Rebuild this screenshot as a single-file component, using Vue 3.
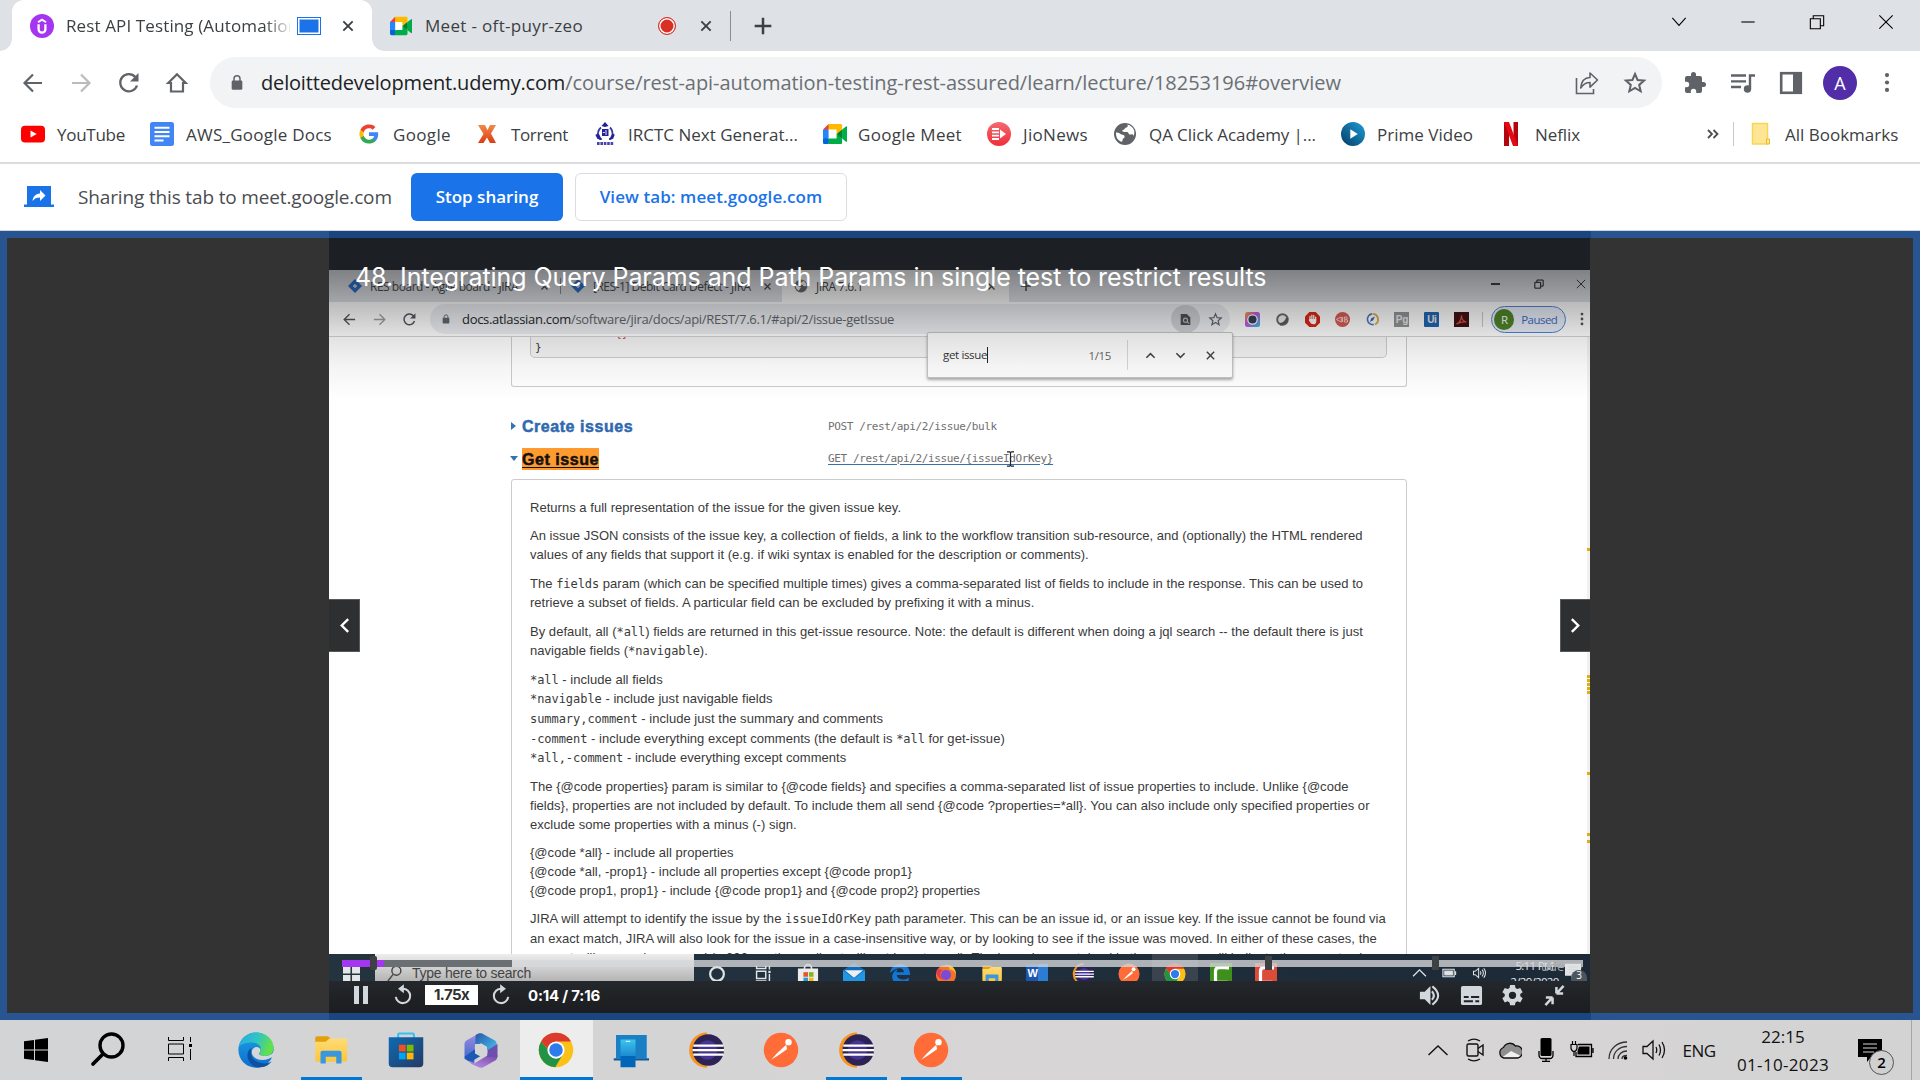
<script setup>
const bookmarks = [
  { icon: 'youtube', label: 'YouTube', slot: 129, gap: 12, size: 24, track: -0.27 },
  { icon: 'docs', label: 'AWS_Google Docs', slot: 208, gap: 12, size: 24, track: 0.24 },
  { icon: 'google', label: 'Google', slot: 119, gap: 13, size: 22, track: 0.35 },
  { icon: 'torrent', label: 'Torrent', slot: 116, gap: 14, size: 20, track: -0.36 },
  { icon: 'irctc', label: 'IRCTC Next Generat...', slot: 230, gap: 11, size: 24, track: 0 },
  { icon: 'meet', label: 'Google Meet', slot: 164, gap: 11, size: 24, track: 0.29 },
  { icon: 'jio', label: 'JioNews', slot: 126, gap: 12, size: 24, track: 0.32 },
  { icon: 'globe', label: 'QA Click Academy |...', slot: 228, gap: 12, size: 24, track: -0.09 },
  { icon: 'prime', label: 'Prime Video', slot: 158, gap: 12, size: 24, track: 0.02 },
  { icon: 'netflix', label: 'Neflix', slot: 90, gap: 12, size: 24, track: -0.09 },
]
const extensions = [
  { icon: 'lens' }, { icon: 'ring' }, { icon: 'hand' }, { icon: 'adb' }, { icon: 'compass' },
  { label: 'Pg', kind: 'pg' }, { label: 'Ui', kind: 'ui' }, { icon: 'acrobat' },
]
const recordedApps = ['cortana', 'views', 'bag', 'mail', 'eold', 'firefox', 'folder', 'word', 'eclipse', 'postman', 'chrome', 'camgreen', 'camred']
const apps = [
  { icon: 'edge', open: false },
  { icon: 'folder', open: true },
  { icon: 'store', open: false },
  { icon: 'm365', open: false },
  { icon: 'chrome', open: true, active: true },
  { icon: 'phone', open: false },
  { icon: 'eclipse', open: false },
  { icon: 'postman', open: false },
  { icon: 'eclipse', open: true },
  { icon: 'postman', open: true },
]
const tray = ['t-up', 't-cam', 't-cloud', 't-mic', 't-battery', 't-wifi', 't-sound']
const scrollMarks = [548, 675, 679, 683, 687, 691, 772, 833, 840]
</script>

<template>
  <div class="screen">
    <svg class="sprite" aria-hidden="true">
      <defs>
        <linearGradient id="gEdge" x1="0" y1="0" x2="1" y2="0.3"><stop offset="0" stop-color="#2aa7e6" /><stop offset=".55" stop-color="#30c4c4" /><stop offset="1" stop-color="#62e04a" /></linearGradient>
        <linearGradient id="gEdgeB" x1="0" y1="0" x2="0" y2="1"><stop offset="0" stop-color="#1da0e2" /><stop offset="1" stop-color="#0b6fd0" /></linearGradient>
        <linearGradient id="gStore" x1="0" y1="0" x2="1" y2="1"><stop offset="0" stop-color="#0d6bb5" /><stop offset="1" stop-color="#253a63" /></linearGradient>
        <linearGradient id="gPrime" x1="1" y1="0" x2="0" y2="1"><stop offset="0" stop-color="#1d9fd8" /><stop offset="1" stop-color="#053a63" /></linearGradient>
        <linearGradient id="gJio" x1="0" y1="0" x2="0" y2="1"><stop offset="0" stop-color="#f4696e" /><stop offset="1" stop-color="#ef2f3a" /></linearGradient>
        <linearGradient id="gFolder" x1="0" y1="0" x2="0" y2="1"><stop offset="0" stop-color="#ffdc77" /><stop offset="1" stop-color="#fbc63c" /></linearGradient>
        <linearGradient id="gM1" x1="0" y1="0" x2="0" y2="1"><stop offset="0" stop-color="#a08ae0" /><stop offset="1" stop-color="#2a66c8" /></linearGradient>
        <linearGradient id="gM2" x1="0" y1="0" x2="1" y2="1"><stop offset="0" stop-color="#2854a8" /><stop offset="1" stop-color="#4ad0f6" /></linearGradient>
        <linearGradient id="gM3" x1="0" y1="1" x2="1" y2="0"><stop offset="0" stop-color="#c795f5" /><stop offset="1" stop-color="#7049a4" /></linearGradient>
        <linearGradient id="gPhone" x1="0" y1="0" x2="0" y2="1"><stop offset="0" stop-color="#3cc5ec" /><stop offset="1" stop-color="#1a86d0" /></linearGradient>
        <linearGradient id="gLens" x1="0" y1="0" x2="1" y2="1"><stop offset="0" stop-color="#f5a623" /><stop offset=".4" stop-color="#d04bd8" /><stop offset="1" stop-color="#22c1f0" /></linearGradient>
        <linearGradient id="gTorrent" x1="0" y1="0" x2="0" y2="1"><stop offset="0" stop-color="#ef8a4a" /><stop offset="1" stop-color="#dd3c10" /></linearGradient>
      </defs>
      <symbol id="udemy" viewBox="0 0 24 24"><circle cx="12" cy="12" r="12" fill="#a435f0" /><path d="M8 8.2 12 5.6l4 2.6" fill="none" stroke="#fff" stroke-width="1.9" /><path d="M8.6 10.2v5a3.4 3.4 0 0 0 6.8 0v-5" fill="none" stroke="#fff" stroke-width="2.3" /></symbol>
      <symbol id="meet" viewBox="0 0 24 24"><path d="M5.600 7.600h8v8.800h-8z" fill="#fff" /><path fill="#00832d" d="M13.600 12l2.300 2.700 3.200 2 .5-4.700-.5-4.600-3.200 1.700z" /><path fill="#0066da" d="M0 16.400v4C0 21.300.7 22 1.600 22h4l.8-3-.8-2.600-3-.8z" /><path fill="#e94235" d="M5.600 2 0 7.600l2.900.8 2.700-.8.8-2.600z" /><path fill="#2684fc" d="M0 7.600h5.600v8.800H0z" /><path fill="#00ac47" d="M23 4.500 19.100 7.600v9l3.900 3.100c.6.5 1 0 1-.6V5c0-.7-.6-1-1-.5zM13.600 12v4.400h-8V22h12c.9 0 1.500-.7 1.500-1.600v-3.700z" /><path fill="#ffba00" d="M17.600 2h-12v5.600h8V12l5.500-4.600V3.600c0-.9-.6-1.600-1.500-1.600z" /></symbol>
      <symbol id="youtube" viewBox="0 0 24 24"><rect y="3.700" width="24" height="16.800" rx="4" fill="#f00" /><path d="M9.500 8.500v7l6.200-3.500z" fill="#fff" /></symbol>
      <symbol id="docs" viewBox="0 0 24 24"><rect width="24" height="24" rx="2.500" fill="#4285f4" /><path d="M4.500 5.800h15M4.500 10h15M4.500 14.300h15M4.500 18.500h9" stroke="#fff" stroke-width="2" /></symbol>
      <symbol id="google" viewBox="0 0 24 24"><path fill="#4285f4" d="M22 12.200c0-.7-.1-1.400-.2-2H12v3.900h5.600a4.800 4.800 0 0 1-2.100 3.100v2.600h3.400c2-1.800 3.100-4.500 3.100-7.600z" /><path fill="#34a853" d="M12 22.300c2.800 0 5.200-.9 6.900-2.500l-3.400-2.600c-.9.600-2.100 1-3.500 1-2.700 0-5-1.800-5.800-4.300H2.700v2.700A10.400 10.400 0 0 0 12 22.300z" /><path fill="#fbbc05" d="M6.200 13.900a6.200 6.200 0 0 1 0-3.900V7.300H2.700a10.300 10.300 0 0 0 0 9.300z" /><path fill="#ea4335" d="M12 5.700c1.500 0 2.900.5 4 1.600l3-3A10.400 10.400 0 0 0 2.700 7.300L6.200 10C7 7.500 9.300 5.700 12 5.700z" /></symbol>
      <symbol id="torrent" viewBox="0 0 20 24"><path d="M1 3h7l2.500 5L13 3h6l-5 8.500 5 9.500h-6l-3-5.500L6.500 21H1l5.500-9z" fill="url(#gTorrent)" /></symbol>
      <symbol id="irctc" viewBox="0 0 24 24"><path d="M8 5.500C5 8 4.500 13 5 16l3.500 1M17 5.500c2.500 2.500 3 7 2.500 10.500L16 17" fill="none" stroke="#3a379f" stroke-width="1.800" /><path d="M2.500 12.500C3 16 6 18 9 18l-3-6zM21.800 12.500C21 16 18.500 18 16 18l3-6z" fill="#24219a" /><path d="M8.500 4 12 0l3.500 4-3.500 1z" fill="#24219a" /><rect x="9" y="7" width="6.500" height="7" fill="#24219a" /><path d="M13 8v5M9.800 10.500h2" stroke="#dfe0f5" stroke-width="1" /><path d="M4 21.500h17" fill="none" stroke="#4744aa" stroke-width="3" stroke-dasharray="2.600 .8" /></symbol>
      <symbol id="jio" viewBox="0 0 24 24"><circle cx="12" cy="12" r="12" fill="url(#gJio)" /><path d="M5 7h7M5 10.300h7M5 13.600h7M5 17h7" stroke="#fff" stroke-width="1.800" /><path d="M13 7.500 19 12l-6 4.500z" fill="#fff" /></symbol>
      <symbol id="globe" viewBox="0 0 24 24"><circle cx="12" cy="12" r="11" fill="#5f6368" /><path d="M14 2.500c1.500 1 .8 2.500-.7 3-1.800.6-1.600 2-3 2.300-1.700.4-.9 2.200.7 2.200h3c1.800 0 1.400 2.800 3.200 2.600l2-.4c1 .2 1.500 1 1.200 2.200A9 9 0 0 0 21.300 9 9.600 9.600 0 0 0 14 2.500zM3 10.500c2.500-.3 3.500.8 5 1.800 1.500.9 3.600.3 3.600 2.400 0 1.700-1.900 1.400-2 3 0 1.500-.5 2.300-2 1.900A9.400 9.400 0 0 1 3 10.500z" fill="#fff" /></symbol>
      <symbol id="prime" viewBox="0 0 24 24"><circle cx="12" cy="12" r="12" fill="url(#gPrime)" /><path d="M9.300 7.300v9.400l7.500-4.700z" fill="#fff" /></symbol>
      <symbol id="netflix" viewBox="0 0 24 24"><path d="M5 0h5v24H5zM14.500 0H19v24h-4.500z" fill="#b1060f" /><path d="M5 0h5l9 24h-5z" fill="#e50914" /></symbol>
      <symbol id="back" viewBox="0 0 24 24"><path d="M21 12H4M12 3.500 3.500 12l8.500 8.500" fill="none" stroke="currentColor" stroke-width="2.200" /></symbol>
      <symbol id="fwd" viewBox="0 0 24 24"><path d="M3 12h17M12 3.500l8.500 8.500-8.500 8.500" fill="none" stroke="currentColor" stroke-width="2.200" /></symbol>
      <symbol id="reload" viewBox="0 0 24 24"><path d="M20 14.500A8.600 8.600 0 1 1 18.300 6" fill="none" stroke="currentColor" stroke-width="2.300" /><path d="M21.500 2v8.500H13z" fill="currentColor" /></symbol>
      <symbol id="home" viewBox="0 0 24 24"><path d="M12 3.300 3.300 12H6v8.500h12V12h2.700z" fill="none" stroke="currentColor" stroke-width="2.200" /></symbol>
      <symbol id="lock" viewBox="0 0 24 24"><rect x="4" y="9" width="16" height="14" rx="2" fill="currentColor" /><path d="M7.500 10V6.500a4.500 4.500 0 0 1 9 0V10" fill="none" stroke="currentColor" stroke-width="2.200" /></symbol>
      <symbol id="star" viewBox="0 0 24 24"><path d="m12 3 2.600 6 6.500.6-4.900 4.300 1.500 6.400L12 16.900l-5.700 3.400 1.500-6.400L2.900 9.600l6.500-.6z" fill="none" stroke="currentColor" stroke-width="2" /></symbol>
      <symbol id="share" viewBox="0 0 24 24"><path d="M1.500 7v15.500h17V18" fill="none" stroke="currentColor" stroke-width="1.600" /><path d="M15 2v4.500c-5.500.2-8.800 4-9.300 10.500 2.300-3.700 5-5.500 9.300-5.500v4.700L22.500 9z" fill="none" stroke="currentColor" stroke-width="1.600" stroke-linejoin="round" /></symbol>
      <symbol id="puzzle" viewBox="0 0 24 24"><path d="M20.500 11H19V7a2 2 0 0 0-2-2h-4V3.500a2.500 2.500 0 0 0-5 0V5H4a2 2 0 0 0-2 2v3.800h1.500a2.700 2.700 0 0 1 0 5.400H2V20c0 1.100.9 2 2 2h3.800v-1.500a2.700 2.700 0 0 1 5.400 0V22H17a2 2 0 0 0 2-2v-4h1.500a2.500 2.500 0 0 0 0-5z" fill="currentColor" /></symbol>
      <symbol id="queue" viewBox="0 0 24 24"><path d="M0 4.500h15M0 10.300h15M0 16h10" stroke="currentColor" stroke-width="2.300" /><path d="M19 17.500V4.500h5" fill="none" stroke="currentColor" stroke-width="2.400" /><circle cx="16.500" cy="18" r="3.700" fill="currentColor" /></symbol>
      <symbol id="panel" viewBox="0 0 24 24"><rect x="2.200" y="2.200" width="19.600" height="19.600" fill="none" stroke="currentColor" stroke-width="2.600" /><path d="M14 2h8v20h-8z" fill="currentColor" /></symbol>
      <symbol id="dots" viewBox="0 0 24 24"><g fill="currentColor"><circle cx="12" cy="3.500" r="2.400" /><circle cx="12" cy="12" r="2.400" /><circle cx="12" cy="20.500" r="2.400" /></g></symbol>
      <symbol id="close" viewBox="0 0 24 24"><path d="m4 4 16 16M20 4 4 20" fill="none" stroke="currentColor" stroke-width="3.200" /></symbol>
      <symbol id="thinclose" viewBox="0 0 24 24"><path d="m2 2 20 20M22 2 2 22" fill="none" stroke="currentColor" stroke-width="2" /></symbol>
      <symbol id="plus" viewBox="0 0 24 24"><path d="M12 2v20M2 12h20" stroke="currentColor" stroke-width="3" /></symbol>
      <symbol id="restore" viewBox="0 0 24 24"><path d="M2 8h14v14H2zM7 8V2.500h15V17h-6" fill="none" stroke="currentColor" stroke-width="2.400" /></symbol>
      <symbol id="chevup" viewBox="0 0 24 24"><path d="m3 17 9-9 9 9" fill="none" stroke="currentColor" stroke-width="3.400" /></symbol>
      <symbol id="chevdown" viewBox="0 0 24 24"><path d="m3 7 9 9 9-9" fill="none" stroke="currentColor" stroke-width="3.400" /></symbol>
      <symbol id="jira" viewBox="0 0 24 24"><path d="M12 0 24 12 12 24 0 12z" fill="#2268c9" /><path d="m12 8 4 4-4 4-4-4z" fill="#c9d6ec" /></symbol>
      <symbol id="lens" viewBox="0 0 24 24"><rect width="24" height="24" rx="4" fill="url(#gLens)" /><circle cx="12" cy="12" r="8.500" fill="#fff" /><circle cx="12" cy="12" r="6.500" fill="#2b3c52" /></symbol>
      <symbol id="ring" viewBox="0 0 24 24"><circle cx="12" cy="12" r="8.500" fill="#ececec" stroke="#666" stroke-width="3" /><path d="M8 19.500c6 0 11-5 11.500-10" fill="none" stroke="#555" stroke-width="4" /></symbol>
      <symbol id="hand" viewBox="0 0 24 24"><path d="M7 0h10l7 7v10l-7 7H7l-7-7V7z" fill="#d9200f" /><path d="M8 12V7M11 12V5M14 12V5.500M17 13V8" stroke="#fff" stroke-width="2" stroke-linecap="round" /><path d="M7 11h11v4c0 6-8 6-10 1l-2-3z" fill="#fff" /></symbol>
      <symbol id="adb" viewBox="0 0 24 24"><circle cx="12" cy="12" r="12" fill="#d8564f" /><path d="M2 12l8-4v8zM12 8v8M15 8h4v3.500h-4zM15 12.500h5V16h-5z" fill="none" stroke="#f3cfcb" stroke-width="1.600" /></symbol>
      <symbol id="compass" viewBox="0 0 24 24"><path d="M12 3a9 9 0 0 1 4 17" fill="none" stroke="#d5a94c" stroke-width="3" /><path d="M14 20A8.500 8.500 0 1 1 11 3" fill="none" stroke="#4c74b8" stroke-width="2.600" /><path d="m8 16 2-6 6-3-3 6z" fill="#3d5f9c" /></symbol>
      <symbol id="acrobat" viewBox="0 0 24 24"><rect width="24" height="24" fill="#3b0c0c" /><path d="M4 19c5-1 8-8 8-14 0 7 3 10 8 11-6-1-10 0-16 3z" fill="none" stroke="#e2483d" stroke-width="2" /></symbol>
      <symbol id="chrome" viewBox="0 0 48 48"><circle cx="24" cy="24" r="23" fill="#fbc116" /><path d="M4.100 12.500A23 23 0 0 0 23 47l10.500-18L24 24l-10-.5z" fill="#229244" /><path d="M4.100 12.500A23 23 0 0 1 44 12.500H24l-10 11z" fill="#dc3a2e" /><circle cx="24" cy="24" r="11.500" fill="#fff" /><circle cx="24" cy="24" r="9" fill="#2f7bea" /></symbol>
      <symbol id="eclipse" viewBox="0 0 48 48"><path d="M25 2A22 22 0 0 0 25 46 24 24 0 0 1 25 2z" fill="#f7941e" stroke="#f7941e" stroke-width="3" /><circle cx="27" cy="24" r="21" fill="#2c2255" /><circle cx="26" cy="24" r="13" fill="#453490" /><path d="M7 18.300h40.500M6 24.200h42M7 30.100h40.500" stroke="#fff" stroke-width="3" /></symbol>
      <symbol id="postman" viewBox="0 0 48 48"><circle cx="24" cy="24" r="23" fill="#ff6c37" /><circle cx="34" cy="13.500" r="4.300" fill="#fff" /><path d="m31 17-13 12-7 8 8-5 3-2 10-7z" fill="#fff" /></symbol>
      <symbol id="edge" viewBox="0 0 48 48"><circle cx="24" cy="24" r="23.500" fill="url(#gEdgeB)" /><path d="M1 20C3 8 13 .5 24 .5c13 0 23.500 9 23.500 20.500 0 7-5 11-11 11-5 0-8-1.500-8-3s2-2.500 2-6c0-5-5-9-12-9C10 14 3 17 1 20z" fill="url(#gEdge)" /><path d="M18 22c-3 9 3 20 17 20 4 0 7-1 10-3-5 7-13 9-20 8-9-3-14-12-12-19 1-4 3-6 5-6z" fill="#0f4fa0" /><path d="M24 20c-4 1-7 5-5 10 3 7 13 9 22 5.500l3.500-1.500c1.500 0 1.500 1.500.5 3L50 30l-2-5c-2 5-7 7-12 7-5 0-8-1.500-8-3s2-2.500 2-5c0-2.500-3-4.500-6-4z" fill="#d5d6d7" /></symbol>
      <symbol id="folder" viewBox="0 0 48 48"><path d="M3 8c0-1.500 1-2.500 2.500-2.500H20l5 4.500h-3l-3 4H3z" fill="#e3a008" /><path d="M3 13h14l5-4.500h21c1.500 0 2.500 1 2.500 2.500v26c0 1.500-1 2.500-2.500 2.500H5.500C4 39.500 3 38.500 3 37z" fill="url(#gFolder)" /><path d="M10 42V28c0-2 1-3 3-3h22c2 0 3 1 3 3v14h-7v-9H17v9z" fill="#3a96dd" /></symbol>
      <symbol id="store" viewBox="0 0 48 48"><path d="M13.500 9V3.500c0-1 .7-1.500 1.500-1.500h18c.8 0 1.500.5 1.500 1.500V9" fill="none" stroke="#35c1f1" stroke-width="2.800" /><path d="M1 7h46v35a5 5 0 0 1-5 5H6a5 5 0 0 1-5-5z" fill="url(#gStore)" /><path d="M14.500 17h9v9h-9z" fill="#f25022" /><path d="M25 17h9v9h-9z" fill="#7fba00" /><path d="M14.500 27.500h9v9h-9z" fill="#00a4ef" /><path d="M25 27.500h9v9h-9z" fill="#ffb900" /></symbol>
      <symbol id="m365" viewBox="0 0 48 48"><path d="M19 3 5 11c-2 1-3 3-3 5v20l13 6 1-26z" fill="url(#gM1)" /><path d="M15 42 2 35l10 8 9 4c2 1 4 1 6 0l16-9c2-1 3-4 3-7l-14 .5z" fill="url(#gM3)" /><path d="M17 4c4-3 8-3 12 0l13 7c2 1 3 3 3 6v15L32 24l-6-8H16z" fill="url(#gM2)" /><path d="M46 16v17L32 33l1-9z" fill="#6d4fae" /><path d="M2 33c2 6 9 7 13 4l10-6-9-8z" fill="#1c58b4" /><path d="m24 15 8 4.500v9L24 33l-8-4.500v-9z" fill="#d5d5d6" /></symbol>
      <symbol id="phone" viewBox="0 0 48 48"><path d="M4 4h41v31H4z" fill="#1a7fc4" /><path d="M1 35h47v3H1z" fill="#0c5ca0" /><path d="M10 10h20v24H10z" fill="url(#gPhone)" /><path d="M10 32h20v15H10z" fill="#0067b8" /><path d="M17 12.500h6" stroke="#dff6ff" stroke-width="1.500" /></symbol>
      <symbol id="cortana" viewBox="0 0 24 24"><circle cx="12" cy="12" r="7.500" fill="none" stroke="#dfe3e6" stroke-width="2.400" /></symbol>
      <symbol id="views" viewBox="0 0 24 24"><path d="M5 3v3h10V3M5 9h10v8H5zM5 22v-2.500h10V22M19 3v4M19 12v9" fill="none" stroke="#dfe3e6" stroke-width="1.600" /><path d="M17.800 8.500h2.500V11h-2.500z" fill="#dfe3e6" /></symbol>
      <symbol id="bag" viewBox="0 0 24 24"><path d="M8 7C8 0 16 0 16 7" fill="none" stroke="#e8e8e8" stroke-width="1.800" /><path d="M1 6h22v18H1z" fill="#ececea" /><path d="M7 10h5v5H7z" fill="#e8532a" /><path d="M13 10h5v5h-5z" fill="#7fb51d" /><path d="M7 16h5v5H7z" fill="#1c9be0" /><path d="M13 16h5v5h-5z" fill="#f1b61a" /></symbol>
      <symbol id="mail" viewBox="0 0 24 24"><path d="M0 8 12 0l12 8v16H0z" fill="#0f6cbd" /><path d="M2 8h20l-10 8z" fill="#eee" /><path d="M0 8l12 9 12-9v16H0z" fill="#2196e3" /></symbol>
      <symbol id="eold" viewBox="0 0 24 24"><path d="M1 11C2 4 7 1 12.500 1 20 1 23 7 23 13H8.500c.5 5 8 6.500 13 3v5C13 26 3 23 3.500 14 4 10 7 7.500 10 6.500 8.500 8 8.300 9 8.200 10h8C16 4 8 4 1 11z" fill="#1476d4" /></symbol>
      <symbol id="firefox" viewBox="0 0 24 24"><circle cx="12" cy="13" r="11" fill="#f4712b" /><path d="M12 2c8 0 11 6 11 11-1-4-4-6-7-6 0-2-2-4-4-5z" fill="#fbc02e" /><circle cx="12" cy="13" r="5.500" fill="#7b4bd6" /><path d="M2 7c2-1 5 0 7 2H7c-2 3-1 8 3 9-6 0-9-5-8-11z" fill="#e23a4e" /></symbol>
      <symbol id="camgreen" viewBox="0 0 24 24"><path d="M0 0h24v24H0z" fill="#3f8f1c" /><path d="M19 7V5H10Q6 5 6 9v10q0 2 2 2h11" fill="none" stroke="#fff" stroke-width="3.500" /></symbol>
      <symbol id="camred" viewBox="0 0 24 24"><path d="M0 0h24v24H0z" fill="#dd4b39" /><path d="M19 7V5H10Q6 5 6 9v10q0 2 2 2h11" fill="none" stroke="#fff" stroke-width="3.500" /></symbol>
      <symbol id="t-up" viewBox="0 0 24 24"><path d="m2.500 17 9.500-9 9.500 9" fill="none" stroke="#111" stroke-width="1.400" /></symbol>
      <symbol id="t-cam" viewBox="0 0 24 24"><rect x="5" y="6" width="11" height="12" rx="1.500" fill="none" stroke="#111" stroke-width="1.400" /><path d="m16 10.500 5-3.500v10l-5-3.500M6 3c4-2.500 8-2.500 12 0M6 21c4 2.500 8 2.500 12 0" fill="none" stroke="#111" stroke-width="1.400" /></symbol>
      <symbol id="t-cloud" viewBox="0 0 24 24"><path d="M6 20a5.500 5.500 0 0 1-.5-10.500 7 7 0 0 1 12-1.500 6 6 0 0 1 2 12z" fill="#8f8f8f" /><path d="M4 19.500 13 13l9 4.500q-1 2.500-3 2.500H6z" fill="#f0f0f0" /><path d="M6 20a5.500 5.500 0 0 1-.5-10.500 7 7 0 0 1 12-1.500 6 6 0 0 1 2 12z" fill="none" stroke="#111" stroke-width="1.300" /></symbol>
      <symbol id="t-mic" viewBox="0 0 24 24"><rect x="6.500" y="0" width="11" height="18" rx="1.500" fill="#000" /><path d="M5 13v4q0 3.500 3.500 3.500h7q3.500 0 3.500-3.500v-4M12 20v3.500M8 23.500h8" fill="none" stroke="#000" stroke-width="1.300" /></symbol>
      <symbol id="t-battery" viewBox="0 0 24 24"><path d="M8 6.500h13.500v12H6V14M23 10v5" fill="none" stroke="#000" stroke-width="1.300" /><path d="M9 8.500h10.500v8H7.500V13z" fill="#000" /><path d="M1 6.500h6v4q-1 3-3 3t-3-3zM2.500 6.500V3M5.500 6.500V3M4 13v5" fill="#d4d4d4" stroke="#000" stroke-width="1.200" /></symbol>
      <symbol id="t-wifi" viewBox="0 0 24 24"><path d="M3 21C3 11 11 4 21 4M7.500 21C7.500 14 13 8.500 21 8.500M12 21c0-4.500 4-8 9-8M16 21c0-2 2-3.500 5-3.500" fill="none" stroke="#333" stroke-width="1.300" /><circle cx="19.500" cy="20" r="1.800" fill="#000" /></symbol>
      <symbol id="t-sound" viewBox="0 0 24 24"><path d="M1 8.500h4L11 3v18l-6-5.500H1z" fill="none" stroke="#111" stroke-width="1.300" /><path d="M14 9q1.500 3 0 6M17 6.500q3 5.500 0 11M20 4q5 8 0 16" fill="none" stroke="#111" stroke-width="1.300" /></symbol>
      <symbol id="note" viewBox="0 0 24 24"><path d="M0 1h24v18H13l-4 5v-5H0z" fill="currentColor" /><path d="M5 6h14M5 10h14M5 14h11" stroke="#d4d4d4" stroke-width="1.200" /></symbol>
    </svg>

    <!-- tab strip -->
    <header class="tabs">
      <div class="tab active">
        <svg class="i24"><use href="#udemy" /></svg>
        <span class="tab-title fade">Rest API Testing (Automation</span>
        <span class="cast"></span>
        <svg class="x"><use href="#close" /></svg>
      </div>
      <div class="tab second">
        <svg class="i22"><use href="#meet" /></svg>
        <span class="tab-title">Meet - oft-puyr-zeo</span>
        <span class="rec"></span>
        <svg class="x"><use href="#close" /></svg>
      </div>
      <svg class="newtab"><use href="#plus" /></svg>
      <div class="winctl">
        <svg viewBox="0 0 24 24"><path d="m4 7 8 9 8-9" /></svg>
        <svg viewBox="0 0 24 24"><path d="M4 12h16" /></svg>
        <svg viewBox="0 0 24 24"><path d="M4 8h12v12H4zM7.500 8V4.500H20V16.500h-4" /></svg>
        <svg viewBox="0 0 24 24"><path d="m4 4 16 16M20 4 4 20" /></svg>
      </div>
    </header>

    <!-- toolbar -->
    <div class="toolbar">
      <svg class="nav"><use href="#back" /></svg>
      <svg class="nav off"><use href="#fwd" /></svg>
      <svg class="nav"><use href="#reload" /></svg>
      <svg class="nav"><use href="#home" /></svg>
      <div class="omni">
        <svg class="lock"><use href="#lock" /></svg>
        <span class="url"><b>deloittedevelopment.udemy.com</b>/course/rest-api-automation-testing-rest-assured/learn/lecture/18253196#overview</span>
        <svg class="i24 end"><use href="#share" /></svg>
        <svg class="i24"><use href="#star" /></svg>
      </div>
      <div class="actions">
        <svg><use href="#puzzle" /></svg>
        <svg><use href="#queue" /></svg>
        <svg><use href="#panel" /></svg>
        <span class="avatar">A</span>
        <svg class="menu"><use href="#dots" /></svg>
      </div>
    </div>

    <!-- bookmarks -->
    <nav class="marks">
      <div v-for="b in bookmarks" :key="b.label" class="mark" :style="{ width: b.slot + 'px', gap: b.gap + 'px', letterSpacing: b.track + 'px' }">
        <svg :style="{ width: b.size + 'px' }"><use :href="'#' + b.icon" /></svg>{{ b.label }}
      </div>
      <svg class="more" viewBox="0 0 12 12"><path d="m1 2 4 4-4 4M6.500 2l4 4-4 4" /></svg>
      <i class="rule"></i>
      <svg class="bfolder" viewBox="0 0 20 24"><path d="M1.500 1.500h15V22h-15z" fill="#ffe694" stroke="#f8d553" stroke-width="1.500" /><path d="M15.500 22v-5h3v5z" fill="#ffe694" stroke="#e9bd2e" /></svg>
      <span>All Bookmarks</span>
    </nav>

    <!-- share bar -->
    <div class="sharebar">
      <svg class="shareic" viewBox="0 0 30 22"><path d="M3 0h24v19H3z" fill="#1a73e8" /><path d="M0 18.500h30V21H0z" fill="#1a73e8" /><path d="M16 4v3.500C11 8 9 11 8.500 15c2-2.500 4-3.500 7.500-3.500V15l5.500-5.500z" fill="#fff" /></svg>
      <span class="sharetext">Sharing this tab to meet.google.com</span>
      <button class="stop">Stop sharing</button>
      <button class="view">View tab: meet.google.com</button>
    </div>

    <!-- shared tab -->
    <main class="stage">
      <div class="player">
        <div class="band top"></div>
        <div class="rec-window">
          <div class="rtabs">
            <div class="rtab one"><svg><use href="#jira" /></svg><span>RES board - Agile board - JIRA</span><svg class="rx"><use href="#close" /></svg></div>
            <div class="rtab two"><svg><use href="#jira" /></svg><span>[RES-1] Debit Card Defect - JIRA</span><svg class="rx"><use href="#close" /></svg></div>
            <div class="rtab cur"><svg><use href="#globe" /></svg><span>JIRA 7.6.1</span><svg class="rx"><use href="#close" /></svg></div>
            <svg class="rplus"><use href="#plus" /></svg>
            <div class="rctl">
              <i></i>
              <svg><use href="#restore" /></svg>
              <svg><use href="#thinclose" /></svg>
            </div>
          </div>
          <div class="rbar">
            <svg class="rnav"><use href="#back" /></svg>
            <svg class="rnav off"><use href="#fwd" /></svg>
            <svg class="rnav"><use href="#reload" /></svg>
            <div class="romni">
              <svg class="rlock"><use href="#lock" /></svg>
              <span><b>docs.atlassian.com</b>/software/jira/docs/api/REST/7.6.1/#api/2/issue-getIssue</span>
              <i class="finder"><svg viewBox="0 0 16 18"><path d="M1 1h9l5 5v11H1z" fill="#494b50" /><circle cx="8" cy="10" r="3" fill="none" stroke="#bbb" stroke-width="1.600" /><path d="m10 12 3 3" stroke="#bbb" stroke-width="1.600" /></svg></i>
              <svg class="rstar"><use href="#star" /></svg>
            </div>
            <div class="exts">
              <template v-for="(e, k) in extensions" :key="k">
                <svg v-if="e.icon"><use :href="'#' + e.icon" /></svg>
                <b v-else :class="e.kind">{{ e.label }}</b>
              </template>
            </div>
            <i class="rrule"></i>
            <div class="paused"><i>R</i><span>Paused</span></div>
            <svg class="rmenu"><use href="#dots" /></svg>
          </div>

          <div class="page">
            <section class="prev"><div class="snippet"><em>"errors": {}</em><code>}</code></div></section>
            <div class="api"><i class="tri shut"></i><h3>Create issues</h3><code>POST /rest/api/2/issue/bulk</code></div>
            <div class="api"><i class="tri open"></i><h3 class="hit">Get issue</h3><code class="link">GET /rest/api/2/issue/{issueIdOrKey}</code></div>
            <section class="doc">
              <p>Returns a full representation of the issue for the given issue key.</p>
              <p>An issue JSON consists of the issue key, a collection of fields, a link to the workflow transition sub-resource, and (optionally) the HTML rendered<br>values of any fields that support it (e.g. if wiki syntax is enabled for the description or comments).</p>
              <p class="mix">The <code>fields</code> param (which can be specified multiple times) gives a comma-separated list of fields to include in the response. This can be used to<br>retrieve a subset of fields. A particular field can be excluded by prefixing it with a minus.</p>
              <p class="mix">By default, all (<code>*all</code>) fields are returned in this get-issue resource. Note: the default is different when doing a jql search -- the default there is just<br>navigable fields (<code>*navigable</code>).</p>
              <p class="mix"><code>*all</code> - include all fields<br><code>*navigable</code> - include just navigable fields<br><code>summary,comment</code> - include just the summary and comments<br><code>-comment</code> - include everything except comments (the default is <code>*all</code> for get-issue)<br><code>*all,-comment</code> - include everything except comments</p>
              <p>The {@code properties} param is similar to {@code fields} and specifies a comma-separated list of issue properties to include. Unlike {@code<br>fields}, properties are not included by default. To include them all send {@code ?properties=*all}. You can also include only specified properties or<br>exclude some properties with a minus (-) sign.</p>
              <p>{@code *all} - include all properties<br>{@code *all, -prop1} - include all properties except {@code prop1}<br>{@code prop1, prop1} - include {@code prop1} and {@code prop2} properties</p>
              <p class="mix">JIRA will attempt to identify the issue by the <code>issueIdOrKey</code> path parameter. This can be an issue id, or an issue key. If the issue cannot be found via<br>an exact match, JIRA will also look for the issue in a case-insensitive way, or by looking to see if the issue was moved. In either of these cases, the<br>request will proceed as normal (a 302 or other redirect will <b>not</b> be returned). The issue key contained in the response will indicate the current value</p>
            </section>
          </div>

          <div class="rtask">
            <svg class="rwin" viewBox="0 0 16 16"><path d="M0 0h7v7H0zM8.500 0H16v7H8.500zM0 8.500h7V16H0zM8.500 8.500H16V16H8.500z" fill="#e3e6e8" /></svg>
            <div class="rsearch"><svg viewBox="0 0 16 18"><circle cx="10" cy="6" r="4.800" /><path d="M6.500 10 1 17" /></svg><span>Type here to search</span></div>
            <div v-for="r in recordedApps" :key="r" class="rapp" :class="{ on: r === 'chrome' }">
              <b v-if="r === 'word'" class="word">W</b>
              <svg v-else><use :href="'#' + r" /></svg>
            </div>
            <div class="rtray">
              <svg viewBox="0 0 14 10"><path d="m1 8 6-6 6 6" /></svg>
              <svg viewBox="0 0 16 12"><path d="M1 2h12v8H1zM14.500 4v4" /><path d="M3 4h8v4H3z" class="solid" /></svg>
              <svg viewBox="0 0 16 14"><path d="M1 5h2l4-3.500v11L3 9H1zM9 5q1.500 2 0 4M11 3q3 4 0 8M13 1.500q4 5.500 0 11" /></svg>
              <div class="rclock"><span>5:11 PM</span><span>2/29/2020</span></div>
            </div>
          </div>
        </div>
        <div class="band bottom"></div>

        <div class="findbar">
          <span class="q">get issue</span><span class="n">1/15</span><i></i>
          <svg><use href="#chevup" /></svg><svg><use href="#chevdown" /></svg><svg><use href="#close" /></svg>
        </div>
        <svg class="caret" viewBox="0 0 10 18"><path d="M1 1h3l1 1 1-1h3M1 17h3l1-1 1 1h3M5 2v14" /></svg>
        <i v-for="m in scrollMarks" :key="m" class="smark" :style="{ top: m - 238 + 'px' }"></i>

        <div class="shade"></div>
        <h1 class="title">48. Integrating Query Params and Path Params in single test to restrict results</h1>
        <div class="step prevb"><svg viewBox="0 0 12 18"><path d="m10 2-7 7 7 7" /></svg></div>
        <div class="step nextb"><svg viewBox="0 0 12 18"><path d="m2 2 7 7-7 7" /></svg></div>

        <div class="progress"><i class="played"></i><i class="buffer"></i></div>
        <div class="brand">ûdemy</div>
        <svg class="rnote"><use href="#note" /></svg><span class="rbadge">3</span>
        <i class="chap c1"></i><i class="chap c2"></i><i class="chap c3"></i>

        <div class="controls">
          <svg class="pause" viewBox="0 0 14 18"><path d="M0 0h5v18H0zM9 0h5v18H9z" fill="#d1d7dc" /></svg>
          <svg class="seek" viewBox="0 0 20 24"><path d="M2 14a8 8 0 1 0 8-9" fill="none" stroke="#d1d7dc" stroke-width="2.300" /><path d="M11 0v10L4.500 5z" fill="#d1d7dc" /></svg>
          <span class="rate">1.75x</span>
          <svg class="seek" viewBox="0 0 20 24"><path d="M18 14a8 8 0 1 1-8-9" fill="none" stroke="#d1d7dc" stroke-width="2.300" /><path d="M9 0v10l6.500-5z" fill="#d1d7dc" /></svg>
          <span class="time">0:14 / 7:16</span>
          <div class="right">
            <svg viewBox="0 0 24 24"><path d="M2 8h5l6-6v20l-6-6H2z" fill="#d1d7dc" /><path d="M14.500 7.500q4 4.500 0 9M15 2.500q12 9.500 0 19" fill="none" stroke="#d1d7dc" stroke-width="2.200" /></svg>
            <svg viewBox="0 0 24 24"><rect x="1" y="2" width="22" height="20" rx="2" fill="#d1d7dc" /><path d="M4 13.500h5M11.500 13.500H20M4 18h9.500M16 18h4" stroke="#202225" stroke-width="2" /></svg>
            <svg viewBox="0 0 24 24"><path fill="#d1d7dc" fill-rule="evenodd" d="m9.500 1-.6 3.200-2 1.100-3-1.100-2.500 4.300 2.500 2v2.300l-2.500 2 2.500 4.400 3-1.200 2 1.200.6 3.100h5l.6-3.100 2-1.200 3 1.200 2.500-4.400-2.500-2v-2.300l2.500-2-2.500-4.300-3 1.100-2-1.100L14.500 1zM12 8a3.800 3.800 0 1 1 0 7.600A3.800 3.800 0 0 1 12 8z" /></svg>
            <svg viewBox="0 0 24 24"><path d="M14 10V3M14 10h7M14 10l7.500-8M10 14v7M10 14H3M10 14l-7.500 8" fill="none" stroke="#d1d7dc" stroke-width="2.600" /></svg>
          </div>
        </div>
      </div>
    </main>

    <!-- taskbar -->
    <footer class="taskbar">
      <div class="slot start"><svg class="win" viewBox="0 0 24 24"><path d="M0 3.300 10 2v9.500H0zM11 1.800 24 0v11.500H11zM0 12.500h10V22L0 20.700zM11 12.500h13V24l-13-1.800z" /></svg></div>
      <div class="slot search"><svg class="find" viewBox="0 0 34 34"><circle cx="20.500" cy="13.500" r="11.500" fill="none" stroke="#000" stroke-width="3.400" /><path d="M12 22 2 32" stroke="#000" stroke-width="3.800" stroke-linecap="round" /></svg></div>
      <div class="slot views"><svg class="tv" viewBox="0 0 24 24"><path d="M.5 0v3.500h15V0M.5 7h15v10H.500zM.5 24v-3.500h15V24M22.500 0v5M22.500 12v11" fill="none" stroke="#000" stroke-width="1" /><path d="M21 7h3v3h-3z" /></svg></div>
      <div v-for="(a, k) in apps" :key="k" class="slot app" :class="{ open: a.open, active: a.active }"><svg><use :href="'#' + a.icon" /></svg></div>
      <div class="tray">
        <svg v-for="t in tray" :key="t"><use :href="'#' + t" /></svg>
        <span class="lang">ENG</span>
        <div class="clock"><span>22:15</span><span class="date">01-10-2023</span></div>
        <div class="notes"><svg><use href="#note" /></svg><b>2</b></div>
      </div>
    </footer>
  </div>
</template>

<style>
body { overflow: hidden; }
</style>
<style scoped>
.screen { width: 1920px; height: 1080px; display: flex; flex-direction: column; background: #fff; font-family: "Open Sans", "Noto Sans", sans-serif; color: #3c4043; overflow: hidden; }
.screen * { box-sizing: border-box; }
.sprite { position: absolute; width: 0; height: 0; }
svg { flex: none; display: block; overflow: visible; }
i, em { font-style: normal; }
.i24 { width: 24px; height: 24px; }
.i22 { width: 22px; height: 22px; }

.tabs { height: 51px; background: #dee1e6; display: flex; align-items: center; padding-left: 12px; }
.tab { height: 51px; display: flex; align-items: center; font-size: 17px; letter-spacing: .33px; white-space: nowrap; }
.active.tab { width: 360px; background: #fff; border-radius: 12px 12px 0 0; padding-left: 18px; position: relative; letter-spacing: .12px; }
.active.tab::before, .active.tab::after { content: ""; position: absolute; bottom: 0; width: 12px; height: 12px; }
.active.tab::before { left: -12px; background: radial-gradient(circle at 0 0, transparent 11.5px, #fff 12px); }
.active.tab::after { right: -12px; background: radial-gradient(circle at 100% 0, transparent 11.5px, #fff 12px); }
.tab-title { margin-left: 12px; }
.fade { width: 224px; overflow: hidden; -webkit-mask-image: linear-gradient(90deg, #000 198px, transparent 228px); mask-image: linear-gradient(90deg, #000 198px, transparent 228px); }
.cast { width: 24px; height: 18px; margin-left: 7px; border: 1.500px solid #1a73e8; background: #1a73e8; box-shadow: inset 0 0 0 1.500px #fff; }
.x { width: 14px; height: 14px; margin-left: 20px; color: #3c4043; }
.second { width: 359px; padding-left: 18px; border-right: 1px solid #8a8d91; height: 30px; }
.second .tab-title { margin-left: 13px; width: 233px; }
.rec { width: 18px; height: 18px; border-radius: 50%; background: #d93025; border: 1.500px solid #d93025; box-shadow: inset 0 0 0 1.500px #fff; }
.second .x { margin-left: 23px; }
.newtab { width: 20px; height: 20px; margin-left: 22px; color: #3c4043; }
.winctl { margin-left: auto; display: flex; width: 276px; margin-bottom: 8px; }
.winctl svg { width: 20px; height: 20px; margin: 0 24.500px; fill: none; stroke: #000; stroke-width: 1.300; }

.toolbar { height: 66px; padding: 0 0 3px 21px; display: flex; align-items: center; color: #5f6368; }
.nav { width: 24px; height: 24px; margin-right: 24px; }
.nav.off { color: #babcbe; }
.omni { width: 1452px; height: 51px; border-radius: 26px; background: #f1f3f4; display: flex; align-items: center; padding: 0 15px 0 17px; margin-left: -3px; }
.lock { width: 16px; height: 17px; margin: 0 16px 0 2px; }
.url { font-size: 20px; letter-spacing: -.03px; white-space: nowrap; color: #6b6f74; }
.url b { font-weight: 400; color: #202124; letter-spacing: -.17px; }
.omni .end { margin-left: auto; margin-right: 24px; }
.actions { display: flex; align-items: center; margin-left: 21px; }
.actions svg { width: 24px; height: 24px; margin-right: 24px; }
.actions svg.menu { margin: 0 0 0 18px; height: 21px; }
.avatar { width: 34px; height: 34px; border-radius: 50%; background: #512da8; color: #fff; display: flex; align-items: center; justify-content: center; font: 18px "Open Sans", sans-serif; margin-left: -4px; }

.marks { height: 47px; padding: 0 21px 11px 21px; border-bottom: 2px solid #dadce0; display: flex; align-items: center; font-size: 17px; white-space: nowrap; }
.mark { display: flex; align-items: center; flex: none; }
.mark svg { height: 24px; }
.more { width: 12px; height: 12px; fill: none; stroke: #4b4f54; stroke-width: 1.800; margin-left: 118px; }
.rule { width: 1px; height: 24px; background: #c6c8cb; margin-left: 14px; }
.bfolder { width: 20px; height: 24px; margin: 0 14px 0 17px; }

.sharebar { height: 67px; display: flex; align-items: center; padding-left: 24px; background: #fff; border-bottom: 1px solid #cfd3d8; }
.shareic { width: 30px; height: 22px; }
.sharetext { font-size: 19px; letter-spacing: -.15px; margin-left: 24px; width: 333px; white-space: nowrap; color: #4a4d51; }
button { font: 600 17px "Open Sans", sans-serif; height: 48px; border-radius: 6px; padding: 0 0 1px; white-space: nowrap; }
.stop { width: 152px; background: #1a73e8; color: #fff; border: 0; }
.view { width: 272px; margin-left: 12px; background: #fff; color: #1a73e8; border: 1px solid #dadce0; letter-spacing: .08px; }

.stage { height: 789px; padding: 7px; background: linear-gradient(90deg, #285591 329px, #194680 329px, #194680 1591px, #285591 1591px); }
.player { height: 775px; width: 1906px; background: #333; padding: 0 323px 0 322px; position: relative; }
.band { background: #1c1f23; }
.band.top { height: 32px; }
.band.bottom { height: 32px; background: linear-gradient(#24272b, #1b1d20); }
.rec-window { width: 1261px; height: 711px; background: #fff; overflow: hidden; }

.rtabs { height: 32px; background: #dee1e6; display: flex; font-size: 12px; letter-spacing: -.48px; color: #3c4043; }
.rtab { display: flex; align-items: center; height: 32px; white-space: nowrap; }
.rtab > svg:first-child { width: 14px; height: 14px; }
.rtab .rx { width: 9px; height: 9px; }
.one { width: 231px; padding-left: 19px; }
.one span { margin-left: 8px; width: 170px; }
.two { width: 222px; padding-left: 11px; position: relative; }
.two::before { content: ""; position: absolute; left: 0; width: 1px; height: 16px; background: #888; }
.two span { margin-left: 8px; width: 170px; }
.cur { width: 227px; padding-left: 12px; background: #fff; border-radius: 8px 8px 0 0; }
.cur span { margin-left: 8px; width: 171px; }
.rplus { width: 12px; height: 12px; margin: 10px 0 0 11px; }
.rctl { margin-left: auto; display: flex; align-items: center; height: 28px; padding-right: 4px; }
.rctl i { width: 9px; height: 1.500px; background: #333; margin-right: 34px; }
.rctl svg { width: 10px; height: 10px; color: #111; }
.rctl svg:last-child { margin-left: 32px; }
.rbar { height: 35px; display: flex; align-items: center; padding-left: 13px; border-bottom: 1px solid #d0d2d5; color: #4d5156; }
.rnav { width: 15px; height: 15px; margin-right: 15px; }
.rnav.off { color: #9c9ea1; }
.romni { height: 30px; width: 800px; margin-left: -2px; border-radius: 15px; background: #eceef1; display: flex; align-items: center; padding-left: 11px; font-size: 13px; letter-spacing: -.3px; white-space: nowrap; color: #5f6368; }
.romni b { font-weight: 400; color: #202124; }
.rlock { width: 10px; height: 12px; margin-right: 11px; }
.finder { margin-left: auto; width: 29px; height: 28px; border-radius: 50%; background: #cfd0d3; display: flex; align-items: center; justify-content: center; }
.finder svg { width: 11px; height: 13px; }
.rstar { width: 15px; height: 15px; margin: 0 7px 0 8px; }
.exts { display: flex; gap: 14.900px; margin-left: 15px; }
.exts svg, .exts b { width: 15px; height: 15px; }
.exts b { font: 700 10px/15px "Liberation Sans", sans-serif; text-align: center; color: #e8e8e8; letter-spacing: -.3px; }
.pg { background: #8f9092; }
.ui { background: #1b61ae; border-radius: 1px; }
.rrule { width: 1px; height: 15px; background: #c4c6c8; margin: 0 8px 0 13px; }
.paused { width: 75px; height: 27px; border: 1.500px solid #4d81d6; border-radius: 14px; display: flex; align-items: center; padding-left: 2px; background: #e8edf8; color: #3a67c0; font-size: 11.500px; letter-spacing: -.55px; }
.paused i { width: 20px; height: 21px; border-radius: 50%; background: #4a8020; color: #fff; display: flex; align-items: center; justify-content: center; margin-right: 7px; }
.rmenu { width: 14px; height: 14px; margin-left: 9px; }

.page { height: 617px; overflow: hidden; padding-left: 182px; box-shadow: inset -3px 0 #f1f1f1; }
.prev { width: 896px; height: 50px; border: 1px solid #ccc; border-top: 0; border-radius: 0 0 3px 3px; padding-left: 18px; }
.snippet { width: 857px; height: 21px; border: 1px solid #ccc; border-top: 0; border-radius: 0 0 5px 5px; background: #f5f5f6; overflow: hidden; font: 11px/15px "DejaVu Sans Mono", monospace; padding-left: 4px; color: #333; display: flex; flex-direction: column; }
.snippet em { margin: -11px 0 0 14px; color: #c33; }
.snippet code { font: inherit; line-height: 14px; }
.api { width: 895px; height: 32px; display: flex; align-items: center; }
.prev + .api { margin-top: 23px; }
.tri { width: 11px; flex: none; }
.tri::before { content: ""; display: block; border: 4px solid transparent; width: 0; }
.tri.shut::before { border-left: 5px solid #3572b0; border-right: 0; }
.tri.open::before { border-top: 5px solid #3572b0; border-bottom: 0; margin-left: -1px; border-width: 5px 4px 0; }
h3 { margin: 1px 0 0; font: 700 16px/22px "Liberation Sans", sans-serif; letter-spacing: .54px; color: #2f69b0; white-space: nowrap; -webkit-text-stroke: .5px; padding-top: 1px; }
.hit { background: #ff9b2e; color: #111; text-decoration: underline; text-decoration-thickness: 1px; text-underline-offset: 2px; line-height: 21px; }
.api code { margin-left: auto; width: 578px; font: 11px "DejaVu Sans Mono", monospace; letter-spacing: -.37px; color: #707070; }
.api .link { text-decoration: underline; text-decoration-color: #3572b0; text-underline-offset: 2px; }
.doc { margin-top: 5px; width: 896px; height: 520px; border: 1px solid #ccc; border-radius: 3px; padding: 18px 0 0 18px; color: #3a3a3a; font: 13px/19px "Liberation Sans", Arial, sans-serif; letter-spacing: .03px; white-space: nowrap; }
.doc p { margin: 0 0 9.400px; }
.doc .mix { line-height: 19.600px; margin-bottom: 8.800px; }
.doc code { font: 12px "DejaVu Sans Mono", monospace; line-height: 1; letter-spacing: -.05px; }

.rtask { height: 27px; background: linear-gradient(90deg, #24343f, #1c2a38); display: flex; overflow: hidden; }
.rwin { width: 17px; height: 17px; margin: 12px 15px 0 14px; }
.rsearch { width: 319px; background: linear-gradient(#ededed, #b4b4b4); display: flex; padding: 11px 0 0 12px; font: 14px/17px "Liberation Sans", sans-serif; letter-spacing: -.25px; color: #444; }
.rsearch svg { width: 15px; height: 17px; fill: none; stroke: #444; stroke-width: 1.500; margin-right: 10px; }
.rapp { width: 45.800px; display: flex; justify-content: center; padding-top: 9px; flex: none; }
.rapp.on { background: #3a444f; }
.rapp svg { width: 22px; height: 22px; }
.word { width: 22px; height: 20px; margin-top: 1px; background: linear-gradient(90deg, #1b55b0 12px, #2b7cd3 12px); color: #fff; font: 700 11px/18px "Liberation Sans", sans-serif; padding-left: 1px; }
.rtray { display: flex; padding: 0 0 0 123px; }
.rtray svg { width: 15px; height: 12px; margin: 13px 15px 0 0; fill: none; stroke: #dfe3e6; stroke-width: 1.200; }
.rtray .solid { fill: #dfe3e6; }
.rclock { display: flex; flex-direction: column; font: 11.500px/16px "Open Sans", sans-serif; letter-spacing: -.7px; color: #e6e8ea; text-align: center; padding: 4px 0 0 3px; margin-left: 5px; height: 40px; flex: none; white-space: nowrap; }

.findbar { position: absolute; left: 920px; top: 94px; width: 306px; height: 46px; background: #fff; border: 1px solid #c4c4c4; border-radius: 2px; box-shadow: 0 2px 3px #0005; display: flex; align-items: center; padding-left: 15px; font-size: 11.500px; letter-spacing: -.35px; color: #333; }
.findbar .q { border-right: 1px solid #222; line-height: 16px; white-space: nowrap; }
.findbar .n { margin-left: auto; color: #666; }
.findbar i { width: 1px; height: 30px; background: #d8d8d8; margin: 0 17px 0 16px; }
.findbar svg { width: 11px; height: 11px; margin-right: 19px; color: #444; }
.findbar svg:last-child { margin-right: 16px; }
.caret { position: absolute; left: 999px; top: 213px; width: 9px; height: 16px; fill: none; stroke: #222; stroke-width: 1.300; }
.smark { position: absolute; left: 1580px; width: 3px; height: 3px; background: #dcae10; }
.shade { position: absolute; left: 322px; top: 32px; width: 1261px; height: 130px; pointer-events: none; background: linear-gradient(rgba(28,29,31,.49), rgba(28,29,31,.31) 31px, rgba(28,29,31,.13) 66px, rgba(28,29,31,.05) 95px, rgba(28,29,31,0)); }
.title { position: absolute; left: 348px; top: 23px; margin: 0; font: 400 25px/32px Inter, sans-serif; letter-spacing: -.06px; color: #fff; white-space: nowrap; }
.step { position: absolute; top: 361px; width: 31px; height: 53px; background: #2d2f31; border: 1px solid #55595e; display: flex; align-items: center; justify-content: center; }
.step svg { width: 11px; height: 17px; fill: none; stroke: #fff; stroke-width: 2.600; }
.prevb { left: 322px; border-left: 0; }
.nextb { left: 1553px; width: 30px; border-right: 0; }
.brand { position: absolute; left: 1534px; top: 720px; font: 13px/16px "Open Sans", sans-serif; color: #a3a9ae; }
.rnote { position: absolute; left: 1558px; top: 725px; width: 16px; height: 16px; color: #dfe3e6; }
.rbadge { position: absolute; left: 1564px; top: 732px; width: 16px; height: 11px; border-radius: 8px 8px 0 0; background: #4c555d; color: #fff; font: 10px/11px "Open Sans", sans-serif; text-align: center; }
.progress { position: absolute; left: 335px; top: 722px; width: 1241px; height: 7px; background: #d6d8dac8; display: flex; }
.played { width: 42px; background: #a435f0; }
.buffer { width: 128px; background: #6a6f73; }
.chap { position: absolute; top: 718px; width: 7px; height: 14px; background: #3e4143; }
.c1 { left: 363px; border-radius: 2px; } .c2 { left: 1258px; } .c3 { left: 1425px; }
.controls { position: absolute; left: 322px; top: 743px; width: 1261px; height: 32px; display: flex; align-items: center; padding: 0 24px 4px 25px; }
.pause { width: 14px; height: 18px; }
.seek { width: 18px; height: 22px; margin: 0 13px 0 26px; }
.rate { width: 53px; height: 20px; background: #fff; color: #2d2f31; font: 700 15px/20px Inter, sans-serif; letter-spacing: -.55px; text-align: center; }
.rate + .seek { margin: 0 18px 0 14px; }
.time { font: 700 15px Inter, sans-serif; letter-spacing: -.19px; color: #fff; white-space: nowrap; }
.right { margin-left: auto; display: flex; gap: 18.700px; }
.right svg { width: 23px; height: 23px; }

.taskbar { height: 60px; background: linear-gradient(90deg, #d2d4d6, #d5d4d4 30%, #d8d5d7 75%, #d3d3d3); display: flex; color: #111; }
.slot { display: flex; align-items: center; justify-content: center; height: 60px; flex: none; }
.start { width: 72px; } .search { width: 69px; } .views { width: 77px; }
.win { width: 24px; height: 24px; } .find { width: 34px; height: 34px; margin: -3px 0 0 2px; } .tv { width: 24px; height: 24px; margin-top: -2px; }
.app { width: 75px; position: relative; }
.app svg { width: 36px; height: 36px; }
.app.open::after { content: ""; position: absolute; left: 8px; bottom: 0; width: 61px; height: 3px; background: #0078d7; }
.app.active { background: #ededed; background-clip: content-box; padding: 0 0 0 2px; }
.app.active svg { margin-left: -2px; }
.app.active::after { left: 2px; width: 73px; }
.tray { margin-left: auto; display: flex; align-items: center; width: 500px; font-size: 17px; }
.tray > svg { width: 24px; height: 24px; margin: 0 6px; }
.lang { width: 54px; text-align: center; letter-spacing: -.5px; }
.clock { width: 114px; display: flex; flex-direction: column; align-items: center; line-height: 28px; padding-top: 1px; }
.date { letter-spacing: .33px; }
.notes { position: relative; width: 72px; height: 60px; border-right: 1px solid #a5a5a5; padding: 18px 0 0 18px; color: #000; }
.notes svg { width: 24px; height: 24px; }
.notes b { position: absolute; left: 29px; top: 30px; width: 25px; height: 25px; border-radius: 50%; border: 1px solid #555; background: #d0d0d0; font: 600 15px/23px "Open Sans", sans-serif; text-align: center; }
</style>
